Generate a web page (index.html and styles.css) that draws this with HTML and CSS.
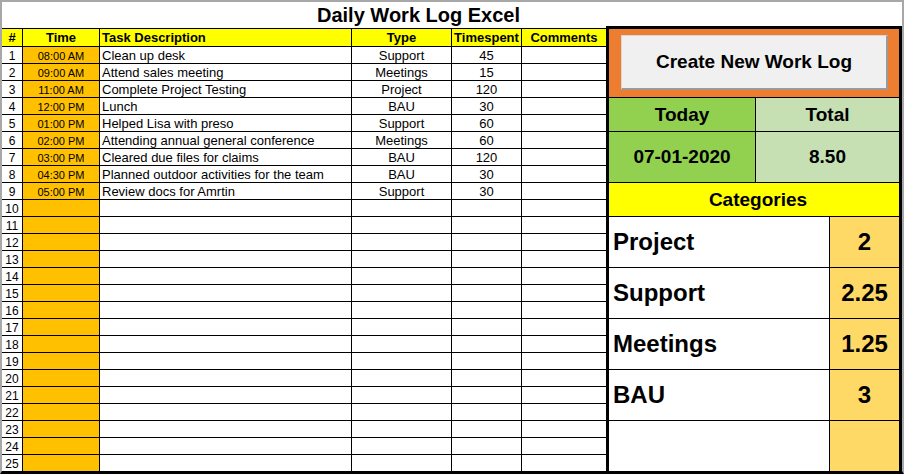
FILE: index.html
```html
<!DOCTYPE html>
<html>
<head>
<meta charset="utf-8">
<link rel="stylesheet" href="styles.css">
</head>
<body>
<div class="sheet">
  <div class="left">
    <div class="title">Daily Work Log Excel</div>
    <div class="log">
      <div class="h c">#</div><div class="h c">Time</div><div class="h l">Task Description</div><div class="h c">Type</div><div class="h c">Timespent</div><div class="h c">Comments</div>

      <div class="n">1</div><div class="t">08:00 AM</div><div class="d">Clean up desk</div><div class="c">Support</div><div class="c">45</div><div></div>
      <div class="n">2</div><div class="t">09:00 AM</div><div class="d">Attend sales meeting</div><div class="c">Meetings</div><div class="c">15</div><div></div>
      <div class="n">3</div><div class="t">11:00 AM</div><div class="d">Complete Project Testing</div><div class="c">Project</div><div class="c">120</div><div></div>
      <div class="n">4</div><div class="t">12:00 PM</div><div class="d">Lunch</div><div class="c">BAU</div><div class="c">30</div><div></div>
      <div class="n">5</div><div class="t">01:00 PM</div><div class="d">Helped Lisa with preso</div><div class="c">Support</div><div class="c">60</div><div></div>
      <div class="n">6</div><div class="t">02:00 PM</div><div class="d">Attending annual general conference</div><div class="c">Meetings</div><div class="c">60</div><div></div>
      <div class="n">7</div><div class="t">03:00 PM</div><div class="d">Cleared due files for claims</div><div class="c">BAU</div><div class="c">120</div><div></div>
      <div class="n">8</div><div class="t">04:30 PM</div><div class="d">Planned outdoor activities for the team</div><div class="c">BAU</div><div class="c">30</div><div></div>
      <div class="n">9</div><div class="t">05:00 PM</div><div class="d">Review docs for Amrtin</div><div class="c">Support</div><div class="c">30</div><div></div>
      <div class="n">10</div><div class="t"></div><div></div><div></div><div></div><div></div>
      <div class="n">11</div><div class="t"></div><div></div><div></div><div></div><div></div>
      <div class="n">12</div><div class="t"></div><div></div><div></div><div></div><div></div>
      <div class="n">13</div><div class="t"></div><div></div><div></div><div></div><div></div>
      <div class="n">14</div><div class="t"></div><div></div><div></div><div></div><div></div>
      <div class="n">15</div><div class="t"></div><div></div><div></div><div></div><div></div>
      <div class="n">16</div><div class="t"></div><div></div><div></div><div></div><div></div>
      <div class="n">17</div><div class="t"></div><div></div><div></div><div></div><div></div>
      <div class="n">18</div><div class="t"></div><div></div><div></div><div></div><div></div>
      <div class="n">19</div><div class="t"></div><div></div><div></div><div></div><div></div>
      <div class="n">20</div><div class="t"></div><div></div><div></div><div></div><div></div>
      <div class="n">21</div><div class="t"></div><div></div><div></div><div></div><div></div>
      <div class="n">22</div><div class="t"></div><div></div><div></div><div></div><div></div>
      <div class="n">23</div><div class="t"></div><div></div><div></div><div></div><div></div>
      <div class="n">24</div><div class="t"></div><div></div><div></div><div></div><div></div>
      <div class="n">25</div><div class="t"></div><div></div><div></div><div></div><div></div>
    </div>
  </div>
  <div class="right">
    <div class="spacer"></div>
    <div class="panel">
      <div class="btn-area"><div class="btn">Create New Work Log</div></div>
      <div class="stats">
        <div class="today">Today</div><div class="total">Total</div>
        <div class="today">07-01-2020</div><div class="total">8.50</div>
      </div>
      <div class="cat-head">Categories</div>
      <div class="cats">
        <div class="cl">Project</div><div class="cv">2</div>
        <div class="cl">Support</div><div class="cv">2.25</div>
        <div class="cl">Meetings</div><div class="cv">1.25</div>
        <div class="cl">BAU</div><div class="cv">3</div>
        <div class="cl"></div><div class="cv"></div>
      </div>
    </div>
  </div>
</div>
</body>
</html>
```
FILE: styles.css
```css
* { box-sizing: border-box; }
html, body { margin: 0; padding: 0; background: #fff; }
body { font-family: "Liberation Sans", Arial, sans-serif; color: #000; }

.sheet {
  width: 904px;
  height: 474px;
  display: flex;
  border-top: 2px solid #a8a8a8;
  border-left: 2px solid #a8a8a8;
  border-right: 2px solid #a8a8a8;
  border-bottom: 3px solid #000;
  background: #fff;
}

.left { width: 604px; display: flex; flex-direction: column; }
.title {
  height: 26px;
  padding-left: 315px;
  font-size: 20px;
  font-weight: bold;
  line-height: 26px;
}

.log {
  display: grid;
  grid-template-columns: 20px 76px 251px 99px 69px 84px;
  grid-template-rows: 17px;
  grid-auto-rows: 16px;
  gap: 1px;
  padding-top: 1px;
  background: #000;
  font-size: 13px;
  line-height: 18px;
}
.log > div { background: #fff; white-space: nowrap; overflow: hidden; }
.log .h { background: #ffff00; font-weight: bold; line-height: 17px; }
.log .c { text-align: center; }
.log .l { padding-left: 2px; }
.log .n { text-align: center; font-size: 12px; }
.log .t { background: #ffc000; text-align: center; font-size: 11px; }
.log .d { padding-left: 2px; }

.right { width: 296px; display: flex; flex-direction: column; }
.spacer { height: 24px; }
.panel {
  flex: 1;
  display: flex;
  flex-direction: column;
  gap: 1px;
  background: #000;
  border-top: 3px solid #000;
  border-left: 3px solid #000;
  border-right: 3px solid #000;
}
.btn-area {
  height: 68px;
  background: #ed7d31;
  padding: 6px 11px 7px 12px;
}
.btn {
  height: 100%;
  background: #f0f0f0;
  border-top: 1px solid #d8d8d8;
  border-left: 1px solid #d8d8d8;
  border-right: 2px solid #9a9a9a;
  border-bottom: 2px solid #9a9a9a;
  display: flex;
  align-items: center;
  justify-content: center;
  font-size: 19px;
  font-weight: bold;
}

.stats {
  display: grid;
  grid-template-columns: 146px 143px;
  grid-template-rows: 33px 50px;
  gap: 1px;
}
.stats > div {
  display: flex;
  align-items: center;
  justify-content: center;
  font-size: 19px;
  font-weight: bold;
}
.today { background: #92d050; }
.total { background: #c6e0b4; }

.cat-head {
  height: 33px;
  background: #ffff00;
  display: flex;
  align-items: center;
  justify-content: center;
  padding-left: 8px;
  font-size: 19px;
  font-weight: bold;
}

.cats {
  flex: 1;
  display: grid;
  grid-template-columns: 220px 69px;
  grid-auto-rows: 50px;
  gap: 1px;
}
.cats > div {
  display: flex;
  align-items: center;
  font-size: 24px;
  font-weight: bold;
}
.cl { background: #fff; padding-left: 4px; }
.cv { background: #ffd966; justify-content: center; }
```
